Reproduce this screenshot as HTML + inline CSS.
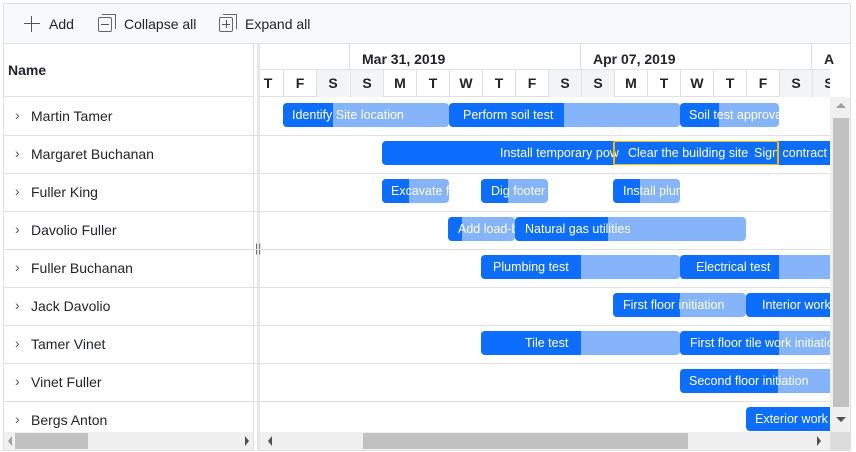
<!DOCTYPE html>
<html><head><style>
*{box-sizing:border-box;margin:0;padding:0}
body{width:856px;height:452px;background:#fff;font-family:"Liberation Sans",sans-serif;position:relative;overflow:hidden;color:#212529}
.a{position:absolute}
.tb{left:3px;top:3px;width:848px;height:41px;background:#f8f9fa;border:1px solid #dee2e6;border-bottom:1px solid #dee2e6}
.tbt{font-size:14px;color:#212529;top:16px}
.hl{background:#dee2e6}
.row{left:3px;width:827px;height:1px;background:#dee2e6}
.nm{font-size:14px;left:31px}
.chev{left:15px;font-size:14px;color:#555}
.day{top:0;width:33px;height:27px;border-left:1px solid #dee2e6;font-weight:bold;font-size:14px;text-align:center;line-height:27px}
.we{background:#f3f4f6}
.mon{top:51px;font-weight:bold;font-size:14px}
.bar{height:24px;background:#86b4fb;border-radius:4px;overflow:hidden;white-space:nowrap}
.bar .p{position:absolute;left:0;top:0;bottom:0;background:#0d6efd}
.bar .t{position:absolute;top:5px;color:#fff;font-size:12.5px}
</style></head><body>
<div class="a tb"></div>
<div class="a" style="left:24px;top:23px;width:16px;height:1px;background:#555"></div>
<div class="a" style="left:31px;top:16px;width:1px;height:16px;background:#555"></div>
<div class="a tbt" style="left:49px">Add</div>
<div class="a" style="left:98px;top:17px;width:14px;height:15px;border:1px solid #666;border-radius:2px"></div>
<div class="a" style="left:102px;top:14px;width:14px;height:15px;border-top:1px solid #666;border-right:1px solid #666"></div>
<div class="a" style="left:101px;top:24px;width:8px;height:1px;background:#555"></div>
<div class="a tbt" style="left:124px">Collapse all</div>
<div class="a" style="left:219px;top:17px;width:14px;height:15px;border:1px solid #666;border-radius:2px"></div>
<div class="a" style="left:223px;top:14px;width:14px;height:15px;border-top:1px solid #666;border-right:1px solid #666"></div>
<div class="a" style="left:222px;top:24px;width:8px;height:1px;background:#555"></div>
<div class="a" style="left:226px;top:20px;width:1px;height:8px;background:#555"></div>
<div class="a tbt" style="left:245px">Expand all</div>
<div class="a" style="left:3px;top:44px;width:848px;height:407px;border:1px solid #dee2e6;border-top:none"></div>
<div class="a" style="left:8px;top:62px;font-weight:bold;font-size:14px">Name</div>
<div class="a hl" style="left:3px;top:96px;width:827px;height:1px"></div>
<div class="a hl" style="left:260px;top:69px;width:570px;height:1px"></div>
<div class="a hl" style="left:349px;top:44px;width:1px;height:26px"></div>
<div class="a hl" style="left:580px;top:44px;width:1px;height:26px"></div>
<div class="a hl" style="left:811px;top:44px;width:1px;height:26px"></div>
<div class="a mon" style="left:362px">Mar 31, 2019</div>
<div class="a mon" style="left:593px">Apr 07, 2019</div>
<div class="a mon" style="left:824px">A</div>
<div class="a" style="left:260px;top:70px;width:570px;height:27px;overflow:hidden">
<div class="a day" style="left:-9px">T</div>
<div class="a day" style="left:23px">F</div>
<div class="a day we" style="left:56px">S</div>
<div class="a day we" style="left:90px">S</div>
<div class="a day" style="left:123px">M</div>
<div class="a day" style="left:156px">T</div>
<div class="a day" style="left:189px">W</div>
<div class="a day" style="left:222px">T</div>
<div class="a day" style="left:255px">F</div>
<div class="a day we" style="left:288px">S</div>
<div class="a day we" style="left:321px">S</div>
<div class="a day" style="left:354px">M</div>
<div class="a day" style="left:387px">T</div>
<div class="a day" style="left:420px">W</div>
<div class="a day" style="left:453px">T</div>
<div class="a day" style="left:486px">F</div>
<div class="a day we" style="left:519px">S</div>
<div class="a day we" style="left:552px">S</div>
</div>
<div class="a" style="left:253px;top:44px;width:7px;height:407px;background:#fff;border-left:1px solid #dee2e6;border-right:3px solid #e6e7eb"></div>
<div class="a" style="left:255px;top:241px;font-size:12px;color:#666">||</div>
<div class="a row" style="top:135px"></div>
<div class="a row" style="top:173px"></div>
<div class="a row" style="top:211px"></div>
<div class="a row" style="top:249px"></div>
<div class="a row" style="top:287px"></div>
<div class="a row" style="top:325px"></div>
<div class="a row" style="top:363px"></div>
<div class="a row" style="top:401px"></div>
<div class="a chev" style="top:107px">&#x203A;</div><div class="a nm" style="top:108px">Martin Tamer</div>
<div class="a chev" style="top:145px">&#x203A;</div><div class="a nm" style="top:146px">Margaret Buchanan</div>
<div class="a chev" style="top:183px">&#x203A;</div><div class="a nm" style="top:184px">Fuller King</div>
<div class="a chev" style="top:221px">&#x203A;</div><div class="a nm" style="top:222px">Davolio Fuller</div>
<div class="a chev" style="top:259px">&#x203A;</div><div class="a nm" style="top:260px">Fuller Buchanan</div>
<div class="a chev" style="top:297px">&#x203A;</div><div class="a nm" style="top:298px">Jack Davolio</div>
<div class="a chev" style="top:335px">&#x203A;</div><div class="a nm" style="top:336px">Tamer Vinet</div>
<div class="a chev" style="top:373px">&#x203A;</div><div class="a nm" style="top:374px">Vinet Fuller</div>
<div class="a chev" style="top:411px">&#x203A;</div><div class="a nm" style="top:412px">Bergs Anton</div>
<div class="a" style="left:260px;top:97px;width:570px;height:335px;overflow:hidden">
<div class="a bar" style="left:23px;top:6px;width:166px"><div class="p" style="width:50px"></div><div class="t" style="left:9px">Identify Site location</div></div>
<div class="a bar" style="left:189px;top:6px;width:231px"><div class="p" style="width:115px"></div><div class="t" style="left:14px">Perform soil test</div></div>
<div class="a bar" style="left:420px;top:6px;width:99px"><div class="p" style="width:39px"></div><div class="t" style="left:9px">Soil test approva</div></div>
<div class="a bar" style="left:122px;top:44px;width:470px;background:#0d6efd"><div class="t" style="left:118px">Install temporary pow</div><div class="t" style="left:246px">Clear the building site</div><div class="t" style="left:372px">Sign contract</div></div>
<div class="a" style="left:353px;top:44px;width:166px;height:24px;border:2px solid #ffb900;border-top-width:1px;border-bottom-width:1px;border-radius:2px"></div>
<div class="a bar" style="left:122px;top:82px;width:67px"><div class="p" style="width:27px"></div><div class="t" style="left:9px">Excavate fo</div></div>
<div class="a bar" style="left:221px;top:82px;width:67px"><div class="p" style="width:27px"></div><div class="t" style="left:10px">Dig footer</div></div>
<div class="a bar" style="left:353px;top:82px;width:67px"><div class="p" style="width:27px"></div><div class="t" style="left:10px">Install plun</div></div>
<div class="a bar" style="left:188px;top:120px;width:67px"><div class="p" style="width:14px"></div><div class="t" style="left:10px">Add load-b</div></div>
<div class="a bar" style="left:255px;top:120px;width:231px"><div class="p" style="width:93px"></div><div class="t" style="left:10px">Natural gas utilities</div></div>
<div class="a bar" style="left:221px;top:158px;width:199px"><div class="p" style="width:100px"></div><div class="t" style="left:12px">Plumbing test</div></div>
<div class="a bar" style="left:420px;top:158px;width:160px"><div class="p" style="width:99px"></div><div class="t" style="left:16px">Electrical test</div></div>
<div class="a bar" style="left:353px;top:196px;width:133px"><div class="p" style="width:67px"></div><div class="t" style="left:10px">First floor initiation</div></div>
<div class="a bar" style="left:486px;top:196px;width:100px;background:#0d6efd"><div class="t" style="left:16px">Interior work</div></div>
<div class="a bar" style="left:221px;top:234px;width:199px"><div class="p" style="width:100px"></div><div class="t" style="left:44px">Tile test</div></div>
<div class="a bar" style="left:420px;top:234px;width:160px"><div class="p" style="width:99px"></div><div class="t" style="left:10px">First floor tile work initiation</div></div>
<div class="a bar" style="left:420px;top:272px;width:160px"><div class="p" style="width:98px"></div><div class="t" style="left:9px">Second floor initiation</div></div>
<div class="a bar" style="left:486px;top:310px;width:100px;background:#0d6efd"><div class="t" style="left:9px">Exterior work in</div></div>
</div>
<div class="a" style="left:830px;top:97px;width:20px;height:335px;background:#f0f0f0"></div>
<div class="a" style="left:833px;top:118px;width:16px;height:289px;background:#c1c1c1"></div>
<div class="a" style="left:836px;top:103px;width:0;height:0;border:5px solid transparent;border-bottom:5px solid #a0a0a0;border-top:none"></div>
<div class="a" style="left:836px;top:417px;width:0;height:0;border:5px solid transparent;border-top:5px solid #505050;border-bottom:none"></div>
<div class="a" style="left:4px;top:432px;width:249px;height:18px;background:#f0f0f0"></div>
<div class="a" style="left:15px;top:433px;width:73px;height:16px;background:#c1c1c1"></div>
<div class="a" style="left:8px;top:436px;border:5px solid transparent;border-right:4px solid #a0a0a0;border-left:none"></div>
<div class="a" style="left:245px;top:436px;border:5px solid transparent;border-left:4px solid #505050;border-right:none"></div>
<div class="a" style="left:260px;top:432px;width:570px;height:18px;background:#f0f0f0"></div>
<div class="a" style="left:363px;top:433px;width:325px;height:16px;background:#c1c1c1"></div>
<div class="a" style="left:268px;top:436px;border:5px solid transparent;border-right:4px solid #505050;border-left:none"></div>
<div class="a" style="left:817px;top:436px;border:5px solid transparent;border-left:4px solid #505050;border-right:none"></div>
<div class="a" style="left:830px;top:432px;width:20px;height:18px;background:#dcdcdc"></div>
</body></html>
